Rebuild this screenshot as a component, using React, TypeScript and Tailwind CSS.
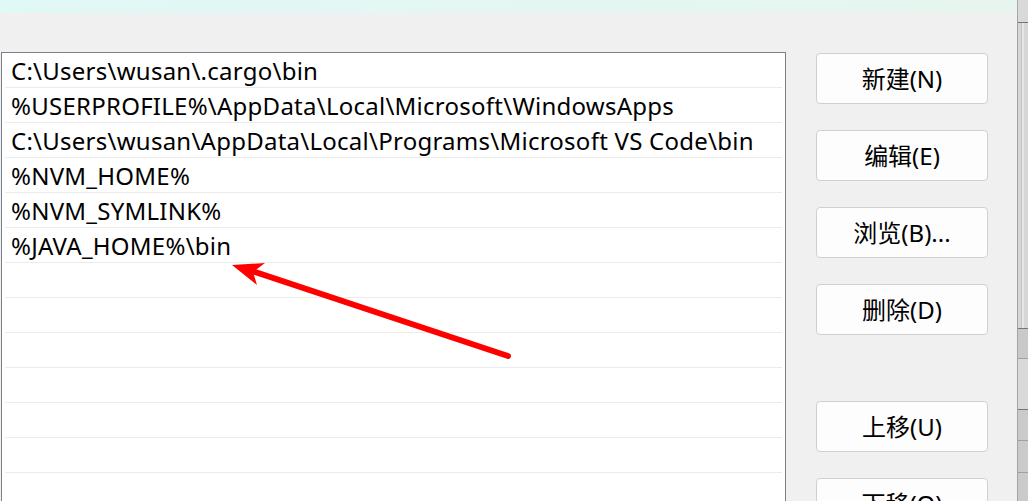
import React from "react";

const rows = [
  "C:\\Users\\wusan\\.cargo\\bin",
  "%USERPROFILE%\\AppData\\Local\\Microsoft\\WindowsApps",
  "C:\\Users\\wusan\\AppData\\Local\\Programs\\Microsoft VS Code\\bin",
  "%NVM_HOME%",
  "%NVM_SYMLINK%",
  "%JAVA_HOME%\\bin",
  "",
  "",
  "",
  "",
  "",
  "",
  "",
];

function Btn({ label, extra = "" }: { label: string; extra?: string }) {
  return (
    <div
      className={
        "w-[172px] h-[51px] shrink-0 flex items-center justify-center rounded-[4px] border border-[#d0d0d0] bg-[#fdfdfd] text-[24px] leading-none text-black " +
        extra
      }
    >
      {label}
    </div>
  );
}

export default function App() {
  return (
    <div
      className="relative w-[1028px] h-[501px] overflow-hidden flex flex-col bg-[#f0f0f0]"
      style={{ fontFamily: '"Noto Sans", "Noto Sans CJK SC", sans-serif' }}
    >
      <div className="h-[13px] shrink-0 flex">
        <div className="flex-1 bg-gradient-to-r from-[#e0f8f6] to-[#e8f5ef]" />
        <div className="w-[11px] bg-[#d9d9d9] border-l border-[#a9a9a9]" />
      </div>
      <div className="flex-1 flex min-h-0">
        <div className="flex-1 flex pt-[39px] pl-[1px] min-w-0">
          <div className="w-[785px] h-[520px] shrink-0 border border-[#7a7f89] bg-white">
            {rows.map((r, i) => (
              <div
                key={i}
                className="h-[35px] mx-[3px] border-b border-[#ebebeb] flex items-center pl-[6px] pt-[2px] text-[24px] tracking-[0.25px] leading-none text-black whitespace-nowrap"
              >
                {r}
              </div>
            ))}
          </div>
          <div className="ml-[30px] pt-[1px] flex flex-col gap-[26px]">
            <Btn label="新建(N)" />
            <Btn label="编辑(E)" />
            <Btn label="浏览(B)..." />
            <Btn label="删除(D)" />
            <Btn label="上移(U)" extra="mt-[40px]" />
            <Btn label="下移(O)" />
          </div>
        </div>
        <div className="w-[11px] shrink-0 flex flex-col border-l border-[#a3a3a3] bg-[#d6d6d6]">
          <div className="h-[10px] shrink-0 bg-[#d9d9d9] border-b border-[#70737d]" />
          <div className="h-[305px] shrink-0 flex">
            <div className="w-[3px]" />
            <div className="w-[3px] bg-[#e6e6e6] border-l border-[#c4c4c4]" />
          </div>
          <div className="h-[30px] shrink-0 bg-[#c9c9c9] border-t border-[#737680]" />
          <div className="h-[51px] shrink-0 bg-[#d9d9d9] border-t border-[#a0a0a0]" />
          <div className="h-[31px] shrink-0 bg-[#cacaca] border-t border-[#737680]" />
          <div className="h-[32px] shrink-0 bg-[#cacaca] border-t border-[#a0a0a0]" />
          <div className="flex-1 bg-[#cacaca] border-t border-[#a0a0a0]" />
        </div>
      </div>
      <svg
        className="absolute left-0 top-0 pointer-events-none"
        width="1028"
        height="501"
        viewBox="0 0 1028 501"
      >
        <line x1="508" y1="356" x2="252" y2="271" stroke="#ff0000" strokeWidth="6" strokeLinecap="round" />
        <polygon points="232,265 265,263 253,272 257,285" fill="#ff0000" />
      </svg>
    </div>
  );
}
